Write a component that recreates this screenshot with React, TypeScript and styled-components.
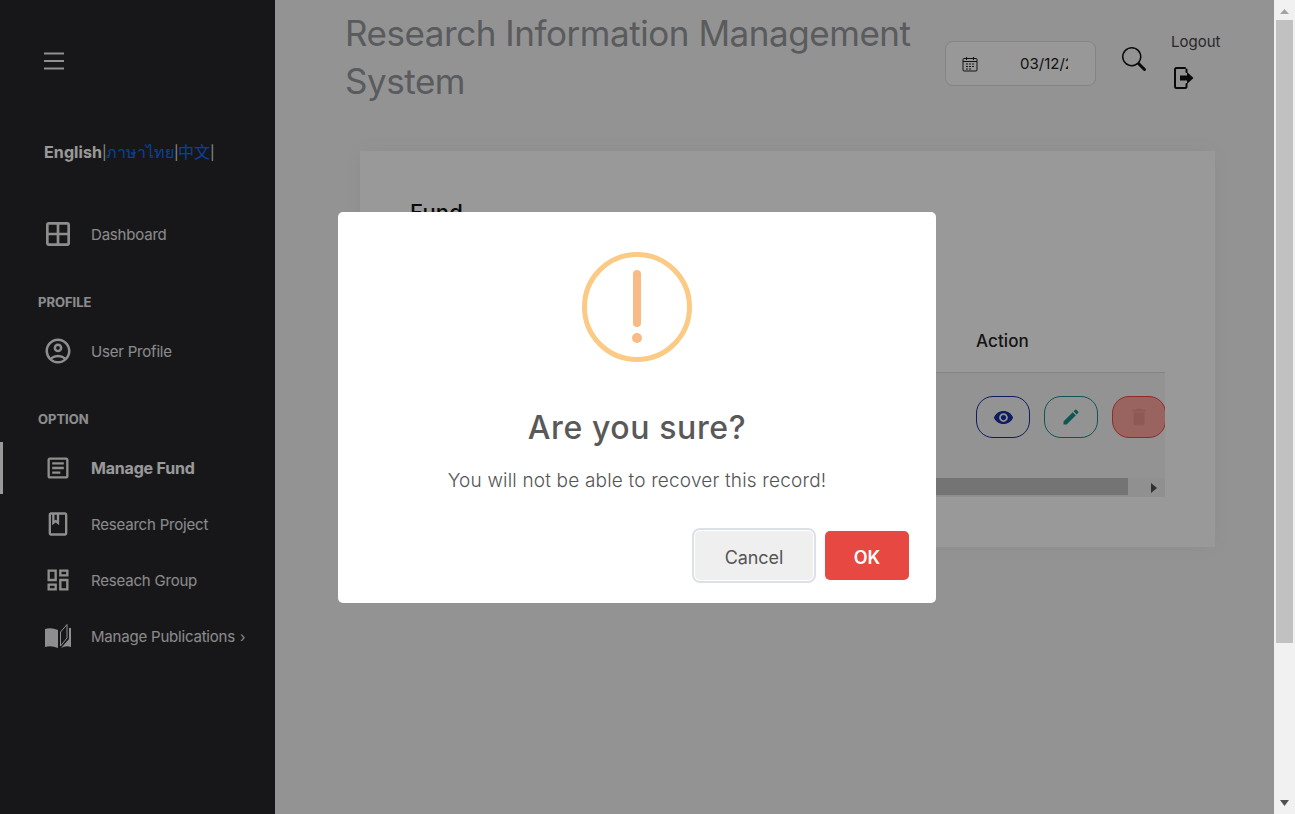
import React from "react";
import styled, { createGlobalStyle } from "styled-components";
import {
  MdOutlineWindow, MdOutlineAccountCircle, MdOutlineArticle, MdOutlineBook,
  MdOutlineDashboard, MdRemoveRedEye, MdEdit, MdDelete,
} from "react-icons/md";
import { BsSearch } from "react-icons/bs";

const Global = createGlobalStyle`
  html, body { margin: 0; padding: 0; height: 100%; overflow: hidden; background: #f5f5f5; font-family: Inter, "Noto Sans", sans-serif; }
`;

const Shell = styled.div`display: flex; height: 100vh; overflow: hidden;`;
const Page = styled.div`flex: 1; min-width: 0; display: flex; position: relative; overflow: hidden;`;

const VBar = styled.div`
  flex: 0 0 21px; background: #f1f1f1; display: flex; flex-direction: column; align-items: center;
`;
const VArrow = styled.svg`flex: 0 0 20px; width: 21px;`;
const VThumb = styled.div`flex: 0 0 623px; width: 17px; background: #c1c1c1;`;
const VRest = styled.div`flex: 1;`;

const Sidebar = styled.aside`
  flex: 0 0 275px; background: #27272c; color: #e6e6e6; box-sizing: border-box; padding-top: 50px;
`;
const Burger = styled.svg`display: block; margin-left: 44px; width: 20px; height: 22px;`;
const Lang = styled.div`
  margin: 70px 0 46px 44px; height: 20px; line-height: 20px; font-size: 16px; white-space: nowrap; color: #fff;
  font-family: Inter, "Noto Sans", "Noto Sans CJK SC", sans-serif;
  b { font-weight: 700; letter-spacing: 0.1px; }
  a { color: #0d6efd; font-weight: 400; text-decoration: none; }
`;
const Sep = styled.span`display: inline-block; width: 4px; font-size: 14px; color: #e6e6e6;`;
const Item = styled.div<{ $active?: boolean }>`
  height: 52px; margin: 4px 0; box-sizing: border-box; display: flex; align-items: center;
  border-left: 3px solid ${(p) => (p.$active ? "#fff" : "transparent")};
  padding-left: 41px; letter-spacing: -0.2px; color: ${(p) => (p.$active ? "#fff" : "#e6e6e6")};
  font-size: ${(p) => (p.$active ? "16px" : "15px")};
  font-weight: ${(p) => (p.$active ? 700 : 400)};
`;
const IconSlot = styled.span`
  flex: 0 0 28px; width: 28px; min-width: 0; height: 30px; margin-right: 19px; display: flex; align-items: center; justify-content: center; color: #ededed;
  svg { flex-shrink: 0; }
`;
const Section = styled.div`
  height: 21px; line-height: 21px; padding: 28px 0 8px 38px; font-size: 13px; font-weight: 700; color: #ececec;
`;
const Chevron = styled.span`margin-left: 5px; font-size: 14px;`;

const Main = styled.main`flex: 1; min-width: 0; padding: 9px 30px 0 70px;`;
const Header = styled.header`display: flex; align-items: flex-start;`;
const Title = styled.h1`
  margin: 0; flex: 0 0 600px; font-size: 35px; line-height: 48px; font-weight: 400; color: #94989c; letter-spacing: -0.45px;
`;
const DateBox = styled.div`
  margin-top: 32px; flex: 0 0 133px; height: 43px; border: 1px solid #dcdcdc; border-radius: 8px; background: #fdfdfd;
  display: flex; align-items: center; padding-left: 16px;
`;
const DateInput = styled.input`
  margin-left: 42px; width: 48px; padding: 0; border: 0; outline: 0; background: transparent;
  font: 400 15px Inter, sans-serif; color: #222;
`;
const SearchBtn = styled.span`margin: 38px 0 0 26px; color: #111; line-height: 0;`;
const LogoutCol = styled.div`margin: 22px 0 0 25px; color: #444; font-size: 15px; line-height: 22px;`;
const LogoutIcon = styled.svg`display: block; margin: 13px 0 0 2px;`;

const Card = styled.section`
  margin: 46px 0 0 15px; width: 855px; height: 396px; box-sizing: border-box; background: #fff;
  padding: 48px 50px 0; box-shadow: 0 0 20px rgba(0, 0, 0, 0.04);
`;
const CardTitle = styled.h2`margin: 0; font-size: 22px; line-height: 26px; font-weight: 500; color: #111; letter-spacing: 0.2px;`;
const ActionHead = styled.div`
  margin-top: 103px; padding-left: 566px; height: 44px; font-size: 17px; line-height: 26px; font-weight: 500; color: #222; letter-spacing: 0.1px;
  border-bottom: 1px solid #dde1e6;
`;
const Scroller = styled.div`width: 755px; height: 124px; overflow: hidden; background: #f5f5f5; display: flex; flex-direction: column;`;
const Row = styled.div`flex: 1; box-sizing: border-box; padding: 23px 0 0 566px; display: flex; align-items: flex-start; gap: 14px;`;
const ActBtn = styled.span<{ $c: string; $fill?: string }>`
  flex: 0 0 54px; height: 42px; box-sizing: border-box; border-radius: 17px; border: 1px solid ${(p) => p.$c};
  background: ${(p) => p.$fill || "transparent"}; color: ${(p) => p.$c};
  display: flex; align-items: center; justify-content: center;
`;
const HBar = styled.div`flex: 0 0 19px; display: flex; background: #f1f1f1;`;
const HThumb = styled.div`flex: 1; height: 17px; background: #c1c1c1;`;
const HEnd = styled.div`flex: 0 0 37px; display: flex; align-items: center; justify-content: flex-end; padding-right: 8px; box-sizing: border-box;`;

const Overlay = styled.div`
  position: absolute; inset: 0; background: rgba(0, 0, 0, 0.4); display: flex; align-items: center; justify-content: center;
`;
const Dialog = styled.div`
  width: 598px; height: 391px; box-sizing: border-box; background: #fff; border-radius: 5px; padding-top: 40px;
  display: flex; flex-direction: column; align-items: center;
`;
const Warn = styled.div`
  width: 110px; height: 110px; box-sizing: border-box; border: 5px solid #fbca85; border-radius: 50%;
  display: flex; flex-direction: column; align-items: center; padding-top: 13px;
`;
const WarnBar = styled.span`width: 8px; height: 57px; border-radius: 4px; background: #f8bb86;`;
const WarnDot = styled.span`width: 10px; height: 10px; margin-top: 6px; border-radius: 50%; background: #f8bb86;`;
const DTitle = styled.h2`
  margin: 45px 0 0; font-size: 32px; line-height: 42px; font-weight: 500; color: #595959; letter-spacing: 0.6px;
`;
const DText = styled.p`
  margin: 18px 0 0; font-size: 19px; line-height: 27px; font-weight: 300; color: #545454; letter-spacing: 0.18px;
`;
const Actions = styled.div`align-self: flex-end; display: flex; align-items: center; margin: 37px 27px 0 0; gap: 12px;`;
const Cancel = styled.button`
  width: 118px; height: 49px; box-sizing: border-box; padding: 4px 0 0; border: 0; border-radius: 5px; background: #efefef; color: #555;
  box-shadow: 0 0 0 1px #fff, 0 0 0 3px #dbe1e6; font: 400 18px Inter, sans-serif; letter-spacing: -0.1px;
`;
const Ok = styled.button`
  width: 84px; height: 49px; padding: 4px 0 0; border: 0; border-radius: 5px; background: #e74841; color: #fff; font: 600 18px Inter, sans-serif;
`;

const BookIcon = () => (
  <svg width="36" height="34" viewBox="0 0 36 34" aria-hidden="true" fill="#ededed">
    <path d="M5 10 Q11 8 18 11 V29 Q11 26 5 28 Z" />
    <path d="M29 9 H31 V28 Q26 26 21 29 L29 20 Z" />
    <path d="M20.5 27 V13 L27 5.5 V19 Z" fill="#27272c" stroke="#ededed" strokeWidth="1" />
  </svg>
);

const nav = (icon: React.ReactNode, label: React.ReactNode, active?: boolean) => (
  <Item $active={active}><IconSlot>{icon}</IconSlot><span>{label}</span></Item>
);

export default function App() {
  return (
    <>
      <Global />
      <Shell>
        <Page>
          <Sidebar>
            <Burger viewBox="0 0 20 22" aria-hidden="true">
              <path d="M0 3.5h20M0 11h20M0 18.5h20" stroke="#f0f0f0" strokeWidth="2" fill="none" />
            </Burger>
            <Lang><b>English</b><Sep>|</Sep><a>ภาษาไทย</a><Sep>|</Sep><a>中文</a><Sep>|</Sep></Lang>
            {nav(<MdOutlineWindow size={32} />, "Dashboard")}
            <Section>PROFILE</Section>
            {nav(<MdOutlineAccountCircle size={30} />, "User Profile")}
            <Section>OPTION</Section>
            {nav(<MdOutlineArticle size={28} />, "Manage Fund", true)}
            {nav(<MdOutlineBook size={28} />, "Research Project")}
            {nav(<MdOutlineDashboard size={28} />, "Reseach Group")}
            {nav(<BookIcon />, <>Manage Publications<Chevron>›</Chevron></>)}
          </Sidebar>
          <Main>
            <Header>
              <Title>Research Information Management System</Title>
              <DateBox>
                <svg width="16" height="16" viewBox="0 0 16 16" aria-hidden="true">
                  <rect x="1" y="2.5" width="14" height="12.5" rx="1" fill="none" stroke="#222" strokeWidth="1" />
                  <path d="M1 5.5h14M4.5 1v3M11.5 1v3" stroke="#222" strokeWidth="1" />
                  <path d="M4 8h2M7 8h2M10 8h2M4 10.5h2M7 10.5h2M10 10.5h2M4 13h2M7 13h2" stroke="#222" strokeWidth="1.2" />
                </svg>
                <DateInput readOnly value="03/12/2024" />
              </DateBox>
              <SearchBtn><BsSearch size={24} /></SearchBtn>
              <LogoutCol>
                Logout
                <LogoutIcon width="22" height="24" viewBox="0 0 22 24" aria-hidden="true">
                  <path d="M12 2H3.5A1.5 1.5 0 0 0 2 3.5v17A1.5 1.5 0 0 0 3.5 22H12a1.5 1.5 0 0 0 1.5-1.5V18M13.5 6V3.5" fill="none" stroke="#111" strokeWidth="2" strokeLinecap="round" />
                  <path d="M7 9.5h7V6l6.5 6-6.5 6v-3.5H7z" fill="#111" />
                </LogoutIcon>
              </LogoutCol>
            </Header>
            <Card>
              <CardTitle>Fund</CardTitle>
              <ActionHead>Action</ActionHead>
              <Scroller>
                <Row>
                  <ActBtn $c="#1a2f9e"><MdRemoveRedEye size={21} /></ActBtn>
                  <ActBtn $c="#148f8c"><MdEdit size={20} /></ActBtn>
                  <ActBtn $c="#f04a42" $fill="#ffa69e"><MdDelete size={22} color="#ec9490" /></ActBtn>
                </Row>
                <HBar>
                  <HThumb />
                  <HEnd>
                    <svg width="6" height="10" viewBox="0 0 6 10" aria-hidden="true"><path d="M0 0 L6 5 L0 10 Z" fill="#505050" /></svg>
                  </HEnd>
                </HBar>
              </Scroller>
            </Card>
          </Main>
          <Overlay>
            <Dialog>
              <Warn><WarnBar /><WarnDot /></Warn>
              <DTitle>Are you sure?</DTitle>
              <DText>You will not be able to recover this record!</DText>
              <Actions>
                <Cancel>Cancel</Cancel>
                <Ok>OK</Ok>
              </Actions>
            </Dialog>
          </Overlay>
        </Page>
        <VBar>
          <VArrow viewBox="0 0 21 20" aria-hidden="true"><path d="M10.5 9 L15 14 H6 Z" fill="#a3a3a3" /></VArrow>
          <VThumb />
          <VRest />
          <VArrow viewBox="0 0 21 20" aria-hidden="true"><path d="M10.5 12 L15 6 H6 Z" fill="#505050" /></VArrow>
        </VBar>
      </Shell>
    </>
  );
}
